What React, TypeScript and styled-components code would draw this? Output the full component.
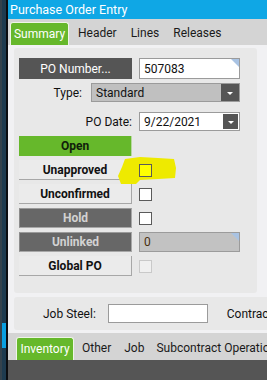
import React from "react";
import styled, { createGlobalStyle } from "styled-components";

const Global = createGlobalStyle`
  html, body { margin: 0; padding: 0; background: #f1f1f3; }
  body { width: 267px; height: 380px; overflow: hidden; font-family: Roboto, "Liberation Sans", sans-serif; font-size: 12px; color: #111; }
`;

const Screen = styled.div`
  display: flex;
  width: 267px;
  height: 380px;
  overflow: hidden;
`;

const LeftStrip = styled.div`
  display: flex;
  flex-direction: column;
  background: #1e3b4f;
  border-left: 2px solid #34424c;
  box-sizing: border-box;
  border-right: 2px solid #0b0d10;
  width: 8px;
`;

const StripSeg = styled.div<{ $h: number; $c: string }>`
  height: ${(p) => p.$h}px;
  background: ${(p) => p.$c};
  flex: none;
`;

const Window = styled.div`
  flex: 1;
  display: flex;
  flex-direction: column;
  min-width: 0;
`;

const TitleBar = styled.div`
  height: 19px;
  background: #0fa7e5;
  color: #fff;
  font-size: 12.5px;
  line-height: 19px;
  padding-left: 2px;
  white-space: nowrap;
  flex: none;
`;

const TabBar = styled.div<{ $h: number }>`
  height: ${(p) => p.$h}px;
  background: #d4d4d4;
  display: flex;
  align-items: flex-end;
  padding-left: 2px;
  flex: none;
  white-space: nowrap;
  overflow: hidden;
`;

const Tab = styled.div<{ $w: number }>`
  height: 23px;
  box-sizing: border-box;
  width: ${(p) => p.$w}px;
  display: flex;
  align-items: center;
  justify-content: center;
  font-size: 12px;
  color: #fff;
  background: #66b82b;
  border: 1px solid #eef5e6;
  border-bottom: none;
  border-radius: 3px 3px 0 0;
  box-shadow: inset 0 0 0 1px #66b82b;
  flex: none;
`;

const TabLabel = styled.span<{ $ml: number }>`
  margin-left: ${(p) => p.$ml}px;
  font-size: 12px;
  color: #1a1a1a;
  line-height: 23px;
  height: 23px;
  flex: none;
`;

const Body = styled.div`
  background: #f1f1f3;
  padding: 3px 0 0 6px;
  display: flex;
  flex-direction: column;
  flex: none;
`;

const Panel = styled.div`
  width: 243px;
  height: 245px;
  box-sizing: border-box;
  background: #e8e8e8;
  border-radius: 3px;
  padding: 10px 0 0 5px;
  display: flex;
  flex-direction: column;
  position: relative;
`;

const Row = styled.div<{ $top: number; $h?: number; $gap?: number }>`
  display: flex;
  align-items: center;
  margin-top: ${(p) => p.$top}px;
  height: ${(p) => p.$h ?? 20}px;
  gap: ${(p) => p.$gap ?? 7}px;
  flex: none;
`;

const Label = styled.div<{ $w: number }>`
  width: ${(p) => p.$w}px;
  text-align: right;
  font-size: 12px;
  color: #111;
  flex: none;
`;

type BtnKind = "dark" | "green" | "light" | "muted";

const StatusButton = styled.div<{ $kind: BtnKind }>`
  width: 113px;
  height: 100%;
  box-sizing: border-box;
  display: flex;
  align-items: center;
  justify-content: center;
  font-size: 12px;
  flex: none;
  font-weight: ${(p) => (p.$kind === "dark" ? 400 : 700)};
  color: ${(p) =>
    p.$kind === "dark" ? "#fff" : p.$kind === "muted" ? "#d2d2d2" : p.$kind === "green" ? "#10200a" : "#111"};
  background: ${(p) =>
    p.$kind === "dark" ? "#555555" : p.$kind === "green" ? "#66b82b" : p.$kind === "muted" ? "#676767" : "#ebebeb"};
  border-right: ${(p) => (p.$kind === "dark" ? "none" : p.$kind === "green" ? "1px solid #b8d8a0" : "1px solid #a7a7a7")};
  border-bottom: ${(p) => (p.$kind === "dark" || p.$kind === "green" ? "none" : "1px solid #a7a7a7")};
  ${(p) => (p.$kind === "muted" ? "border-top: 1px solid #9a9a9a; border-left: 1px solid #8c8c8c;" : "")}
`;

const TextBox = styled.div<{ $w: number; $bg?: string; $flag?: boolean }>`
  width: ${(p) => p.$w}px;
  height: 100%;
  box-sizing: border-box;
  border: 1px solid #9b9b9b;
  background: ${(p) => p.$bg ?? "#fff"};
  display: flex;
  align-items: center;
  padding-left: 4px;
  font-size: 12px;
  color: #111;
  position: relative;
  flex: none;
  ${(p) =>
    p.$flag
      ? `&::after { content: ""; position: absolute; top: 0; right: 0; width: 0; height: 0; border-top: 8px solid #a9c3e3; border-left: 8px solid transparent; }`
      : ""}
`;

const NumberText = styled.span`
  color: #4a3010;
`;

const DropButton = styled.div<{ $inset?: boolean }>`
  position: absolute;
  right: ${(p) => (p.$inset ? 1 : 0)}px;
  top: ${(p) => (p.$inset ? 1 : 0)}px;
  bottom: ${(p) => (p.$inset ? 1 : 0)}px;
  width: ${(p) => (p.$inset ? 15 : 18)}px;
  background: #555555;
  display: flex;
  align-items: center;
  justify-content: center;
  &::before {
    content: "";
    width: 0;
    height: 0;
    border-left: 3px solid transparent;
    border-right: 3px solid transparent;
    border-top: 3px solid #fff;
    margin-top: 1px;
  }
`;

const Check = styled.div<{ $state?: "on" | "off" | "disabled" }>`
  width: 13px;
  height: 13px;
  box-sizing: border-box;
  flex: none;
  border: 1px solid ${(p) => (p.$state === "disabled" ? "#c9c9c9" : "#5a5a5a")};
  background: ${(p) => (p.$state === "on" ? "#ffff00" : p.$state === "disabled" ? "#f0f0f0" : "#fff")};
  position: relative;
  z-index: 1;
`;

const Highlight = styled.svg`
  position: absolute;
  left: 104px;
  top: 109px;
  width: 58px;
  height: 28px;
  pointer-events: none;
`;

const JobPanel = styled.div`
  margin-top: 4px;
  height: 33px;
  background: #e8e8e8;
  border-radius: 3px 0 0 3px;
  display: flex;
  align-items: center;
  white-space: nowrap;
  overflow: hidden;
`;

const JobLabel = styled.span`
  margin-left: 29px;
  font-size: 12px;
  color: #111;
  flex: none;
`;

const JobInput = styled.div`
  margin-left: 12px;
  width: 100px;
  height: 19px;
  box-sizing: border-box;
  border: 1px solid #9b9b9b;
  background: #fff;
  flex: none;
`;

const ContractLabel = styled.span`
  margin-left: 19px;
  font-size: 12px;
  color: #111;
  flex: none;
`;

const Gap = styled.div`
  height: 3px;
  background: #f1f1f3;
  flex: none;
`;

const DarkArea = styled.div`
  flex: 1;
  background: #555555;
`;

export default function App() {
  return (
    <>
      <Global />
      <Screen>
        <LeftStrip>
          <StripSeg $h={323} $c="transparent" />
          <StripSeg $h={25} $c="#0a9fe0" />
        </LeftStrip>
        <Window>
          <TitleBar>Purchase Order Entry</TitleBar>
          <TabBar $h={26}>
            <Tab $w={59}>Summary</Tab>
            <TabLabel $ml={9}>Header</TabLabel>
            <TabLabel $ml={14}>Lines</TabLabel>
            <TabLabel $ml={14}>Releases</TabLabel>
          </TabBar>
          <Body>
            <Panel>
              <Row $top={0} $h={21}>
                <StatusButton $kind="dark">PO Number...</StatusButton>
                <TextBox $w={101} $flag>507083</TextBox>
              </Row>
              <Row $top={4} $h={19} $gap={9}>
                <Label $w={63}>Type:</Label>
                <TextBox $w={149} $bg="#c0c0c0">
                  Standard
                  <DropButton />
                </TextBox>
              </Row>
              <Row $top={10} $h={19}>
                <Label $w={113}>PO Date:</Label>
                <TextBox $w={101}>
                  9/22/2021
                  <DropButton $inset />
                </TextBox>
              </Row>
              <Row $top={5}>
                <StatusButton $kind="green">Open</StatusButton>
              </Row>
              <Row $top={4}>
                <StatusButton $kind="light">Unapproved</StatusButton>
                <Check $state="on" />
              </Row>
              <Row $top={4}>
                <StatusButton $kind="light">Unconfirmed</StatusButton>
                <Check />
              </Row>
              <Row $top={4}>
                <StatusButton $kind="muted">Hold</StatusButton>
                <Check />
              </Row>
              <Row $top={4}>
                <StatusButton $kind="muted">Unlinked</StatusButton>
                <TextBox $w={101} $bg="#c2c2c2" $flag>
                  <NumberText>0</NumberText>
                </TextBox>
              </Row>
              <Row $top={4}>
                <StatusButton $kind="light">Global PO</StatusButton>
                <Check $state="disabled" />
              </Row>
              <Highlight viewBox="0 0 58 28">
                <path
                  d="M7 2 L22 0 L40 1 L56 2 L58 11 L57 21 L40 22 L22 23 L18 27 L3 27 L0 19 L4 10 Z"
                  fill="#eeea00"
                />
              </Highlight>
            </Panel>
            <JobPanel>
              <JobLabel>Job Steel:</JobLabel>
              <JobInput />
              <ContractLabel>Contract</ContractLabel>
            </JobPanel>
          </Body>
          <Gap />
          <TabBar $h={27}>
            <Tab $w={58} style={{ marginLeft: 6 }}>Inventory</Tab>
            <TabLabel $ml={8}>Other</TabLabel>
            <TabLabel $ml={13}>Job</TabLabel>
            <TabLabel $ml={12}>Subcontract Operations</TabLabel>
          </TabBar>
          <DarkArea />
        </Window>
      </Screen>
    </>
  );
}
